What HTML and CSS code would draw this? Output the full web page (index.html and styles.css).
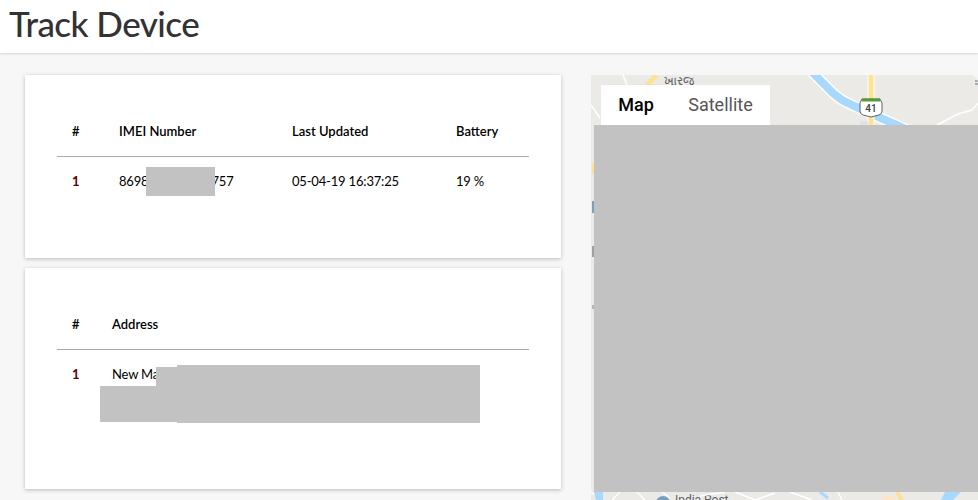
FILE: index.html
```html
<!DOCTYPE html>
<html lang="en">
<head>
<meta charset="utf-8">
<title>Track Device</title>
<link rel="stylesheet" href="styles.css">
</head>
<body>
<header class="page-header"><h1>Track Device</h1></header>
<main class="content">
  <div class="left-col">
    <section class="card">
      <table class="data-table imei-table">
        <thead><tr><th>#</th><th>IMEI Number</th><th>Last Updated</th><th>Battery</th></tr></thead>
        <tbody><tr><td class="num">1</td><td>8698<span class="imei-gap"></span>757</td><td>05-04-19 16:37:25</td><td>19 %</td></tr></tbody>
      </table>
      <div class="redact r-imei"></div>
    </section>
    <section class="card">
      <table class="data-table address-table">
        <thead><tr><th>#</th><th>Address</th></tr></thead>
        <tbody><tr><td class="num">1</td><td>New Ma</td></tr></tbody>
      </table>
      <div class="redact r-addr-a"></div>
      <div class="redact r-addr-b"></div>
      <div class="redact r-addr-c"></div>
    </section>
  </div>
  <section class="map">
    <svg class="map-art" width="387" height="425" viewBox="591 75 387 425" aria-hidden="true">
      <rect x="591" y="75" width="387" height="425" fill="#ebeae7"/>
      <path d="M812 72 L834 94 Q842 101 852 105 L912 132" fill="none" stroke="#fff" stroke-width="11"/>
      <path d="M812 72 L834 94 Q842 101 852 105 L912 132" fill="none" stroke="#a8d8fb" stroke-width="8"/>
      <path d="M871 75 V130" stroke="#fff" stroke-width="7" fill="none"/>
      <path d="M871 75 V130" stroke="#fde293" stroke-width="5" fill="none"/>
      <path d="M937 125 L958 114 L972 110 L978 103" fill="none" stroke="#fff" stroke-width="1.5"/>
      <path d="M657 75 L647 85" stroke="#fde293" stroke-width="5" fill="none"/>
      <path d="M623 75 L627 85 M591 105 L600 118" stroke="#fff" stroke-width="1.5" fill="none"/>
      <path d="M975 81 H978 M975 84 H978" stroke="#6b6f73" stroke-width="1" fill="none"/>
      <rect x="592" y="163" width="2" height="11" fill="#fde293"/>
      <rect x="592" y="201" width="2" height="12" fill="#78a0bd"/>
      <rect x="592" y="246" width="2" height="11" fill="#9aa0a6"/>
      <rect x="592" y="305" width="2" height="4" fill="#b4b8bc"/>
      <rect x="860" y="121" width="8" height="9" fill="#dfe3e8"/>
      <path d="M862 99 H880 L882 103 V111 Q882 114 879 115 L871 117 L863 115 Q860 114 860 111 V103 Z" fill="#fff" stroke="#5f6368"/>
      <rect x="862" y="98.5" width="18" height="3" fill="#5a9a3a"/>
      <text class="shield" x="871" y="112">41</text>
      <text class="place" x="664" y="85">ખારજ</text>
      <circle cx="663" cy="503" r="7" fill="#78a0bd"/>
      <text class="place" x="675" y="504">India Post</text>
      <path d="M591 492 L600 498 M637 492 L645 500 M662 492 L670 498 M735 492 L755 500 L775 493 M790 492 L812 500 M620 492 L612 500 M838 492 L842 500 M700 496 L725 492" stroke="#fff" stroke-width="1.5" fill="none"/>
      <path d="M594 492 H603 V500 H596 Z" fill="#a8d8fb"/>
      <path d="M820 492 L828 498" stroke="#a8d8fb" stroke-width="3" fill="none"/>
      <path d="M897 492 L902 500" stroke="#fde293" stroke-width="4" fill="none"/>
      <path d="M881 500 Q888 492 894 497 L896 500 Z" fill="#fbe6c8"/>
      <path d="M945 492 H961 L953 500 H941 Z" fill="#a8d8fb"/>
    </svg>
    <div class="map-toggle">
      <button class="toggle-btn is-active">Map</button>
      <button class="toggle-btn">Satellite</button>
    </div>
    <div class="redact r-map"></div>
  </section>
</main>
</body>
</html>
```
FILE: styles.css
```css
* { box-sizing: border-box; }
html, body { margin: 0; height: 500px; overflow: hidden; }
body {
  background: #f7f7f7;
  font-family: "Lato", "Liberation Sans", sans-serif;
  color: #000;
}
.page-header {
  height: 53px;
  background: #fff;
  padding-left: 9px;
  box-shadow: 0 1px 2px rgba(0, 0, 0, 0.14);
}
.page-header h1 {
  margin: 0;
  font-size: 35px;
  line-height: 47px;
  font-weight: 500;
  color: #333;
  letter-spacing: -0.55px;
}
.content {
  display: flex;
  align-items: flex-start;
  gap: 30px;
  padding: 22px 0 0 25px;
}
.left-col {
  width: 536px;
  display: flex;
  flex-direction: column;
  gap: 10px;
}
.card {
  position: relative;
  background: #fff;
  padding: 32px 32px 53px;
  box-shadow: 0 1px 4px rgba(0, 0, 0, 0.25);
}
.data-table {
  width: 472px;
  border-collapse: collapse;
  table-layout: fixed;
  font-size: 13px;
}
.data-table th {
  height: 49px;
  padding: 0 15px;
  text-align: left;
  font-weight: 600;
  font-size: 13px;
  border-bottom: 1px solid #aaa;
}
.data-table td {
  height: 49px;
  padding: 0 15px;
  vertical-align: middle;
  letter-spacing: -0.18px;
}
.imei-gap { display: inline-block; width: 62px; margin-left: 1px; }
.imei-table th:nth-child(1) { width: 47px; }
.imei-table th:nth-child(2) { width: 173px; }
.imei-table th:nth-child(3) { width: 164px; }
.address-table th:nth-child(1) { width: 40px; }
.address-table td {
  height: 87px;
  vertical-align: top;
  padding-top: 16px;
}
.data-table .num { color: #5a0000; font-weight: 700; }
.redact { position: absolute; background: #c2c2c2; }
.r-imei { left: 121px; top: 92px; width: 69px; height: 29px; }
.r-addr-a { left: 152px; top: 97px; width: 303px; height: 58px; }
.r-addr-b { left: 131px; top: 99px; width: 21px; height: 20px; }
.r-addr-c { left: 75px; top: 118px; width: 77px; height: 36px; }
.map {
  position: relative;
  width: 387px;
  height: 425px;
  overflow: hidden;
  border-top-right-radius: 8px;
}
.map-art { display: block; }
.map-toggle {
  position: absolute;
  left: 10px;
  top: 10px;
  display: flex;
  height: 40px;
  background: #fff;
  border-radius: 2px;
}
.toggle-btn {
  border: 0;
  background: #fff;
  width: 99px;
  padding: 0 0 2px;
  font-family: "Roboto", sans-serif;
  font-size: 18px;
  color: #565656;
}
.toggle-btn.is-active {
  color: #000;
  font-weight: 500;
  width: 70px;
  box-shadow: 1px 0 1px rgba(0, 0, 0, 0.1);
}
.r-map { left: 3px; top: 50px; width: 384px; height: 367px; }
.place {
  font-family: "Roboto", "Noto Sans", sans-serif;
  font-size: 12px;
  fill: #5f6368;
}
.shield {
  font-family: "Roboto", sans-serif;
  font-size: 10px;
  font-weight: 500;
  fill: #3c4043;
  text-anchor: middle;
}
```
